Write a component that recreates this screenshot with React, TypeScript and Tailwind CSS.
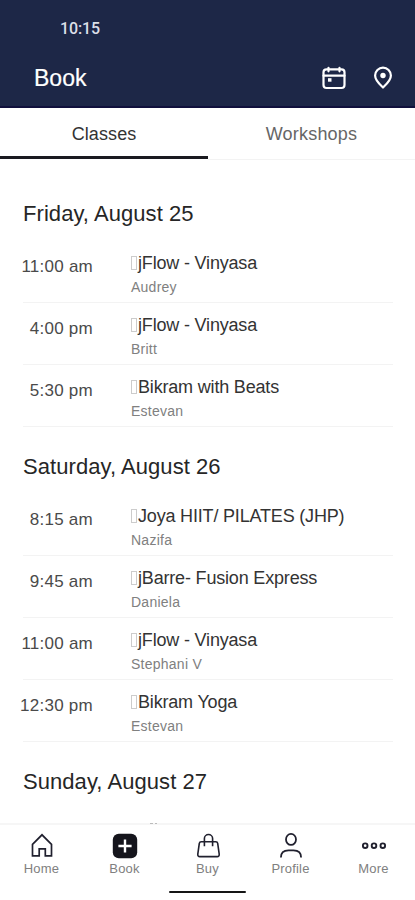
import React from 'react';

interface ClassItem {
  time: string;
  title: string;
  teacher: string;
}

interface Day {
  date: string;
  classes: ClassItem[];
}

const days: Day[] = [
  {
    date: 'Friday, August 25',
    classes: [
      { time: '11:00 am', title: 'jFlow - Vinyasa', teacher: 'Audrey' },
      { time: '4:00 pm', title: 'jFlow - Vinyasa', teacher: 'Britt' },
      { time: '5:30 pm', title: 'Bikram with Beats', teacher: 'Estevan' },
    ],
  },
  {
    date: 'Saturday, August 26',
    classes: [
      { time: '8:15 am', title: 'Joya HIIT/ PILATES (JHP)', teacher: 'Nazifa' },
      { time: '9:45 am', title: 'jBarre- Fusion Express', teacher: 'Daniela' },
      { time: '11:00 am', title: 'jFlow - Vinyasa', teacher: 'Stephani V' },
      { time: '12:30 pm', title: 'Bikram Yoga', teacher: 'Estevan' },
    ],
  },
  { date: 'Sunday, August 27', classes: [] },
];

function CalendarIcon() {
  return (
    <svg className="h-6 w-6" viewBox="0 0 24 24" fill="none" stroke="currentColor" strokeWidth={2.2} strokeLinecap="round">
      <rect x="1.5" y="3.3" width="21" height="18.7" rx="3" />
      <path d="M1.5 9.7h21M6.5 1.8v3.5M17.5 1.8v3.5" />
      <path d="M6 12.2h3.5v3.5H6z" fill="currentColor" stroke="none" />
    </svg>
  );
}

function PinIcon() {
  return (
    <svg className="h-6 w-5" viewBox="0 0 20 24" fill="none" stroke="currentColor" strokeWidth={2.2} strokeLinejoin="round">
      <path d="M10 21.5C7.5 19 2.1 14.8 2.1 9.6a7.9 7.9 0 0 1 15.8 0c0 5.2-5.4 9.4-7.9 11.9z" />
      <circle cx="10" cy="9.5" r="2.7" fill="currentColor" stroke="none" />
    </svg>
  );
}

function HomeIcon() {
  return (
    <svg className="h-7 w-7" viewBox="0 0 28 28" fill="none" stroke="currentColor" strokeWidth={1.7}>
      <path d="M4.5 12.3 14 2.8l9.5 9.5v11.6h-6.2v-7h-6.1v7H4.5z" />
    </svg>
  );
}

function BookIcon() {
  return (
    <svg className="h-7 w-7" viewBox="0 0 28 28">
      <rect x="1.8" y="1.8" width="24.4" height="24.4" rx="6" fill="#15151c" />
      <path d="M14 7.4v13.2M7.4 14h13.2" stroke="#fff" strokeWidth={2.4} />
    </svg>
  );
}

function BagIcon() {
  return (
    <svg className="h-7 w-7" viewBox="0 0 28 28" fill="none" stroke="currentColor" strokeWidth={1.6}>
      <path d="M7.2 9.8h14.6q1.6 0 1.9 1.6l1.5 10.8q.2 2.4-2 2.4H5.8q-2.2 0-2-2.4l1.5-10.8q.3-1.6 1.9-1.6z" />
      <path d="M10.4 14.3V6.6a4.1 4.1 0 0 1 8.2 0v7.7" />
    </svg>
  );
}

function ProfileIcon() {
  return (
    <svg className="h-7 w-7" viewBox="0 0 28 28" fill="none" stroke="currentColor" strokeWidth={1.8}>
      <ellipse cx="14" cy="7.4" rx="5" ry="5.5" />
      <path d="M3.9 25.6c0-5 3-7.2 7.6-7.2h5c4.6 0 7.6 2.2 7.6 7.2" />
    </svg>
  );
}

function MoreIcon() {
  return (
    <svg className="h-7 w-7" viewBox="0 0 28 28" fill="none" stroke="currentColor" strokeWidth={1.9}>
      <circle cx="5.2" cy="13.7" r="2.3" />
      <circle cx="14" cy="13.7" r="2.3" />
      <circle cx="22.8" cy="13.7" r="2.3" />
    </svg>
  );
}

const navItems = [
  { label: 'Home', icon: <HomeIcon /> },
  { label: 'Book', icon: <BookIcon /> },
  { label: 'Buy', icon: <BagIcon /> },
  { label: 'Profile', icon: <ProfileIcon /> },
  { label: 'More', icon: <MoreIcon /> },
];

function ClassRow({ item }: { item: ClassItem }) {
  return (
    <li className="flex h-[62px] border-b border-[#f3f3f3]">
      <div className="-ml-1 w-[75px] shrink-0 pt-4 pr-[1px] text-right text-[17px] leading-5 tracking-[0.25px] whitespace-nowrap text-[#4a4a4a]">
        {item.time}
      </div>
      <div className="ml-[37px] pt-3">
        <div className="flex items-center text-[18px] leading-5 tracking-[-0.18px] whitespace-nowrap text-[#333]">
          <span className="mr-px h-[14px] w-[6px] border border-[#ccc]" />
          {item.title}
        </div>
        <div className="mt-1 text-[14px] leading-5 tracking-[0.25px] text-[#808080]">{item.teacher}</div>
      </div>
    </li>
  );
}

export default function App() {
  return (
    <div className="flex h-[900px] w-[415px] flex-col overflow-hidden bg-white font-['Liberation_Sans',Arial,sans-serif]">
      {/* Header */}
      <header className="h-[108px] shrink-0 border-b-2 border-[#10103c] bg-[#1d2747] text-white">
        <div className="pt-[19px] pl-[60px] font-['Roboto',sans-serif] text-[16px] leading-5 font-medium tracking-[-0.15px] text-[#dcdfe8]">10:15</div>
        <div className="mt-[25px] flex h-7 items-center pr-[22px] pl-[34px]">
          <h1 className="text-[23px] leading-7 [-webkit-text-stroke:0.2px]">Book</h1>
          <div className="ml-auto flex items-center gap-[27px]">
            <CalendarIcon />
            <PinIcon />
          </div>
        </div>
      </header>

      {/* Tabs */}
      <div className="flex h-[52px] shrink-0 text-[18px] leading-5">
        <button className="h-[51px] w-[208px] border-b-[3px] border-[#1a1a20] pt-[3px] tracking-[0.1px] text-[#333]">Classes</button>
        <button className="flex-1 border-b border-[#f3f3f3] tracking-[0.2px] text-[#666]">Workshops</button>
      </div>

      {/* Schedule */}
      <main className="min-h-0 flex-1 overflow-hidden pt-[14px]">
        {days.map((day) => (
          <section key={day.date} className="pr-[22px] pl-[23px]">
            <h2 className="h-[67px] pt-[26px] text-[22px] leading-7 tracking-[0.06px] text-[#262626]">{day.date}</h2>
            <ul>
              {day.classes.map((item) => (
                <ClassRow key={item.time} item={item} />
              ))}
            </ul>
          </section>
        ))}
      </main>

      {/* Bottom navigation */}
      <nav className="flex h-[77px] shrink-0 flex-col border-t-2 border-[#f6f6f6]">
        <div className="-mt-0.5 flex h-px gap-[2px] pl-[150px]">
          <span className="w-[3px] bg-[#bbb]" />
          <span className="w-[2px] bg-[#bbb]" />
        </div>
        <div className="mt-[8px] grid grid-cols-5">
          {navItems.map((item) => (
            <button key={item.label} className="flex flex-col items-center text-[#20202e]">
              {item.icon}
              <span className="mt-px text-[13px] leading-4 tracking-[0.2px] text-[#808080]">{item.label}</span>
            </button>
          ))}
        </div>
        <div className="mx-auto mt-[14px] h-[2px] w-[77px] shrink-0 rounded-full bg-[#151515]" />
      </nav>
    </div>
  );
}
